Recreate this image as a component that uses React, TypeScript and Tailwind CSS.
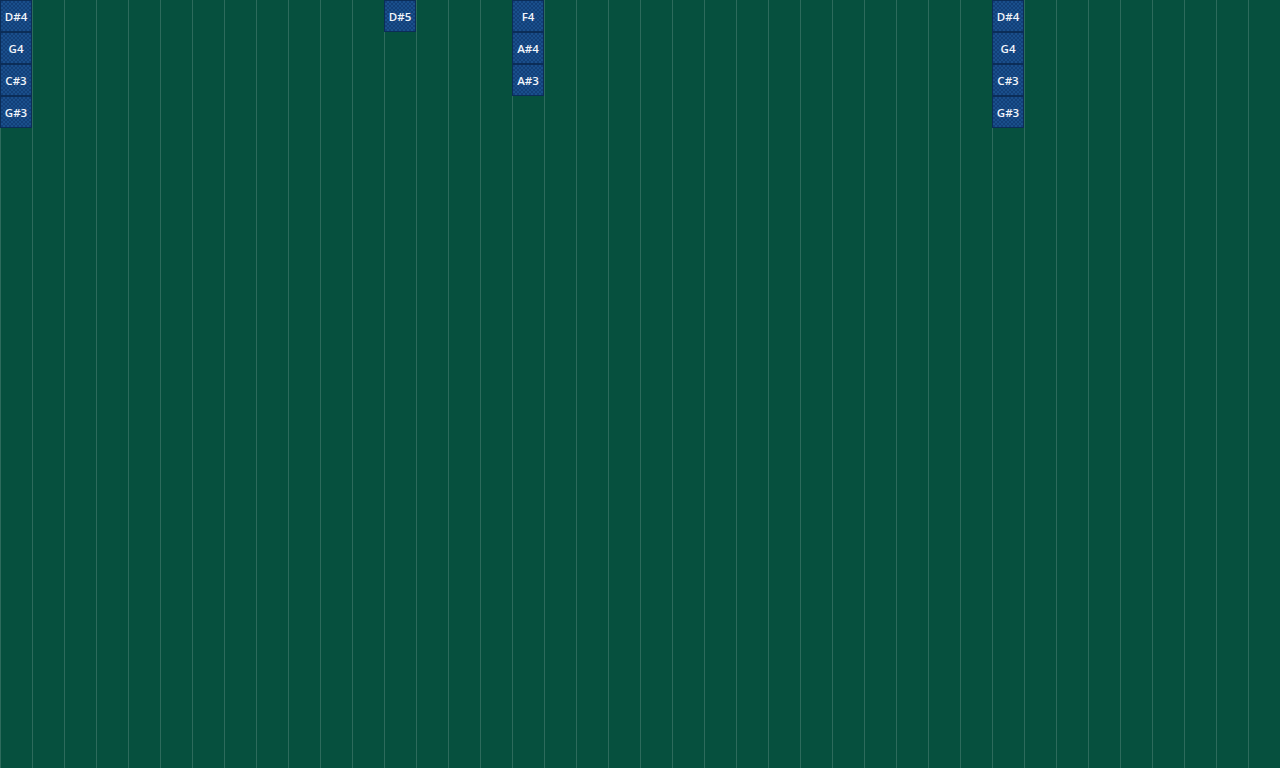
const notes: Record<number, string[]> = {
  0: ["D#4", "G4", "C#3", "G#3"],
  12: ["D#5"],
  16: ["F4", "A#4", "A#3"],
  31: ["D#4", "G4", "C#3", "G#3"],
};

function NoteCell({ label }: { label: string }) {
  return (
    <div className="h-[32px] w-[32px] border border-[#0b2d58] bg-[#154580] bg-[repeating-conic-gradient(#1a4f8c_0%_25%,#123f78_0%_50%)] bg-[length:4px_4px] flex items-center justify-center pt-px text-[11.5px] font-semibold text-[#f2f5fa] leading-none [font-family:'Open_Sans',sans-serif]">
      {label}
    </div>
  );
}

export default function App() {
  const columns = Array.from({ length: 40 }, (_, i) => i);
  return (
    <div className="h-[768px] w-[1280px] overflow-hidden bg-[#06503e] flex">
      {columns.map((c) => (
        <div key={c} className="relative h-full w-[32px] shrink-0 border-l border-[#2d6b5c]">
          {notes[c] && (
            <div className="absolute left-[-1px] top-0 flex flex-col">
              {notes[c].map((n, i) => (
                <NoteCell key={i} label={n} />
              ))}
            </div>
          )}
        </div>
      ))}
    </div>
  );
}
